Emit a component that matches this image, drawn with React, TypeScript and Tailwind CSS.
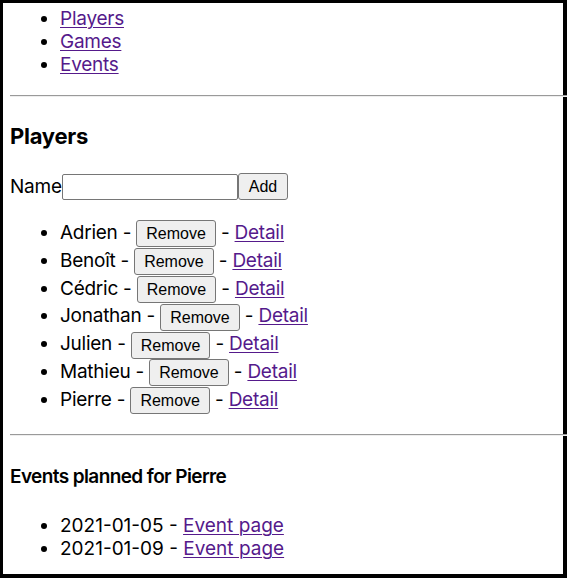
import React from "react"

const players = ["Adrien", "Benoît", "Cédric", "Jonathan", "Julien", "Mathieu", "Pierre"]
const events = ["2021-01-05", "2021-01-09"]

function Link({ children }: { children: React.ReactNode }) {
  return (
    <a href="#" className="text-[#551a8b] underline underline-offset-[2px] decoration-[1px]">
      {children}
    </a>
  )
}

function Rule() {
  return <hr className="mr-[-4px] h-0 border-t border-b border-t-[#9a9a9a] border-b-[#eeeeee]" />
}

export default function App() {
  return (
    <div className="w-[567px] h-[578px] bg-black pt-[3px] pl-[3px] pr-[4px] pb-[4px] font-['Inter',sans-serif] text-black tracking-[-0.25px]">
      <div className="h-full bg-white pl-[7px] pt-[4px] overflow-visible">
        {/* Nav */}
        <ul className="list-disc pl-[50px] text-[19px] leading-[23px] mb-[19px]">
          <li><Link>Players</Link></li>
          <li><Link>Games</Link></li>
          <li><Link>Events</Link></li>
        </ul>

        <Rule />

        <h3 className="mt-[26px] text-[22px] leading-[27px] font-bold">Players</h3>

        <div className="mt-[23px] flex items-center text-[19px] leading-[23px]">
          <span>Name</span>
          <input
            type="text"
            className="w-[176px] h-[26px] border border-[#767676] rounded-[2px] bg-white"
          />
          <button className="h-[27px] px-[10px] border border-[#767676] rounded-[3px] bg-[#efefef] font-['Liberation_Sans',Arial,sans-serif] tracking-normal text-[16px] leading-[19px]">
            Add
          </button>
        </div>

        <ul className="mt-[19px] list-disc pl-[50px] text-[19px]">
          {players.map((name) => (
            <li key={name} className="h-[27.8px] leading-[27.8px]">
              {name} -{" "}
              <button className="h-[27px] px-[9px] align-middle border border-[#767676] rounded-[3px] bg-[#efefef] font-['Liberation_Sans',Arial,sans-serif] tracking-normal text-[16px] leading-[19px]">
                Remove
              </button>{" "}
              - <Link>Detail</Link>
            </li>
          ))}
        </ul>

        <div className="mt-[20px]">
          <Rule />
        </div>

        <h4 className="mt-[29px] text-[19px] leading-[23px] font-semibold tracking-[-0.6px]">Events planned for Pierre</h4>

        <ul className="mt-[26px] list-disc pl-[50px] text-[19px] leading-[23px] tracking-normal">
          {events.map((d) => (
            <li key={d}>
              {d} - <Link>Event page</Link>
            </li>
          ))}
        </ul>
      </div>
    </div>
  )
}
